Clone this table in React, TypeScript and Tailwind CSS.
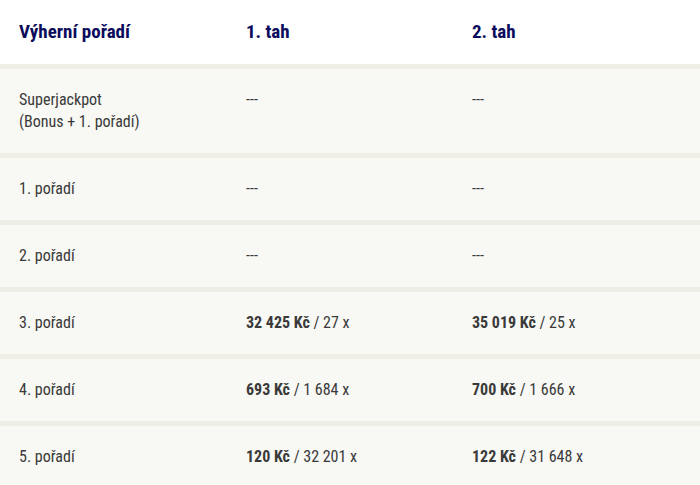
import React from "react";

type Row = { label: React.ReactNode; a: React.ReactNode; b: React.ReactNode; tall?: boolean };

const Prize = ({ amt, count }: { amt: string; count: string }) => (
  <span>
    <span className="font-bold">{amt}</span> / {count}
  </span>
);

const rows: Row[] = [
  {
    label: (
      <>
        Superjackpot
        <br />
        (Bonus + 1. pořadí)
      </>
    ),
    a: "---",
    b: "---",
    tall: true,
  },
  { label: "1. pořadí", a: "---", b: "---" },
  { label: "2. pořadí", a: "---", b: "---" },
  { label: "3. pořadí", a: <Prize amt="32 425 Kč" count="27 x" />, b: <Prize amt="35 019 Kč" count="25 x" /> },
  { label: "4. pořadí", a: <Prize amt="693 Kč" count="1 684 x" />, b: <Prize amt="700 Kč" count="1 666 x" /> },
  { label: "5. pořadí", a: <Prize amt="120 Kč" count="32 201 x" />, b: <Prize amt="122 Kč" count="31 648 x" /> },
];

export default function App() {
  return (
    <div
      className="w-[700px] h-[485px] overflow-hidden bg-[#eeeee6]"
      style={{ fontFamily: "Roboto, 'Liberation Sans', sans-serif", fontStretch: "condensed" }}
    >
      <div className="grid grid-cols-[227px_226px_1fr] pl-[19px] h-[64px] items-center bg-white text-[19px] font-bold text-[#0b0b5c]">
        <div>Výherní pořadí</div>
        <div>1. tah</div>
        <div>2. tah</div>
      </div>
      <div className="flex flex-col gap-[5px] pt-[5px]">
        {rows.map((r, i) => (
          <div
            key={i}
            className={`grid grid-cols-[227px_226px_1fr] pl-[19px] bg-[#f8f8f4] text-[16px] leading-[22px] text-[#3a3a3a] ${
              r.tall ? "h-[84px] pt-[20px]" : "h-[62px] items-center"
            }`}
          >
            <div>{r.label}</div>
            <div>{r.a}</div>
            <div>{r.b}</div>
          </div>
        ))}
      </div>
    </div>
  );
}
